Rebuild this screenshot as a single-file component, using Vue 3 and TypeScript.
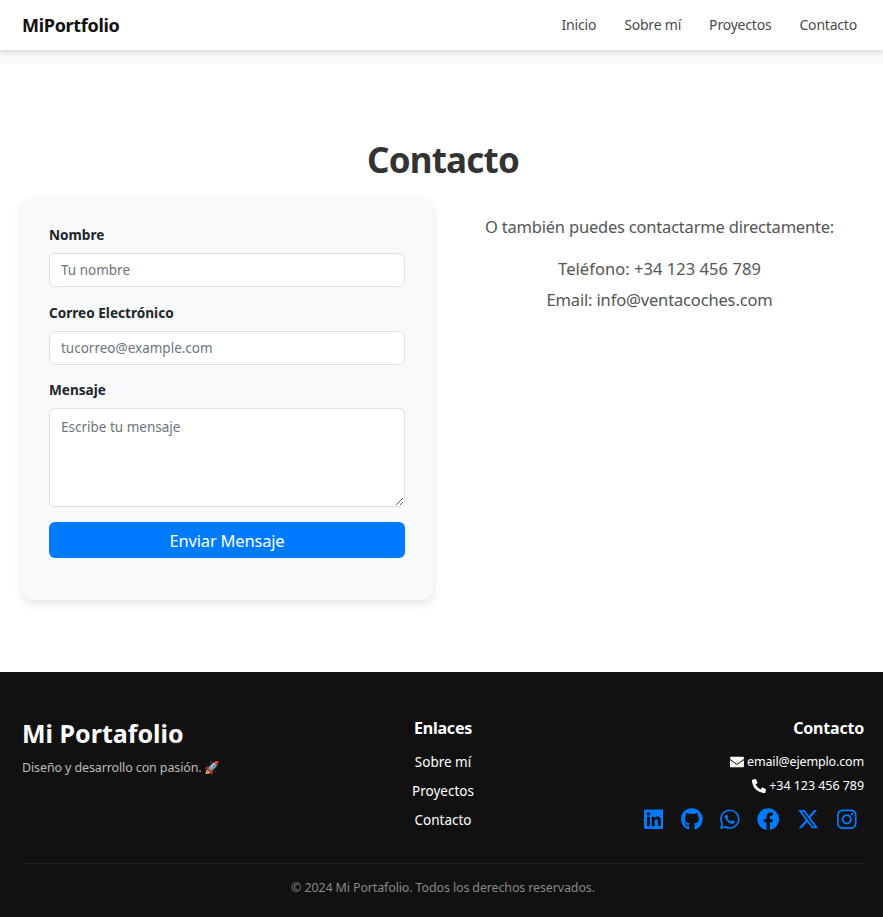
<script setup lang="ts">
const links: string[] = ['Inicio', 'Sobre mí', 'Proyectos', 'Contacto']
const footerLinks: string[] = ['Sobre mí', 'Proyectos', 'Contacto']
const socials: { name: string; w: number; d: string }[] = [
  { name: 'LinkedIn', w: 448, d: 'M416 32H31.9C14.3 32 0 46.5 0 64.3v383.4C0 465.5 14.3 480 31.9 480H416c17.6 0 32-14.5 32-32.3V64.3c0-17.8-14.4-32.3-32-32.3zM135.4 416H69V202.2h66.5V416zm-33.2-243c-21.3 0-38.5-17.3-38.5-38.5S80.9 96 102.2 96c21.2 0 38.5 17.3 38.5 38.5 0 21.3-17.2 38.5-38.5 38.5zm282.1 243h-66.4V312c0-24.8-.5-56.7-34.5-56.7-34.6 0-39.9 27-39.9 54.9V416h-66.4V202.2h63.7v29.2h.9c8.9-16.8 30.6-34.5 62.9-34.5 67.2 0 79.7 44.3 79.7 101.9V416z' },
  { name: 'GitHub', w: 496, d: 'M165.9 397.4c0 2-2.3 3.6-5.2 3.6-3.3 0-5.6-1.6-5.6-3.6 0-2 2.3-3.6 5.2-3.6 3-.3 5.6 1.3 5.6 3.6zm-31.1-4.5c-.7 2 1.3 4.3 4.3 4.9 2.6 1 5.6 0 6.2-2s-1.3-4.3-4.3-5.2c-2.6-.7-5.5.3-6.2 2.3zm44.2-1.7c-2.9.7-4.9 2.6-4.6 4.9.3 2 2.9 3.3 5.9 2.6 2.9-.7 4.9-2.6 4.6-4.6-.3-1.9-3-3.2-5.9-2.9zM244.8 8C106.1 8 0 113.3 0 252c0 110.9 69.8 205.8 169.5 239.2 12.8 2.3 17.3-5.6 17.3-12.1 0-6.2-.3-40.4-.3-61.4 0 0-70 15-84.7-29.8 0 0-11.4-29.1-27.8-36.6 0 0-22.9-15.7 1.6-15.4 0 0 24.9 2 38.6 25.8 21.9 38.6 58.6 27.5 72.9 20.9 2.3-16 8.8-27.1 16-33.7-55.9-6.2-112.3-14.3-112.3-110.5 0-27.5 7.6-41.3 23.6-58.9-2.6-6.5-11.1-33.3 2.6-67.9 20.9-6.5 69 27 69 27 20-5.6 41.5-8.5 62.8-8.5s42.8 2.9 62.8 8.5c0 0 48.1-33.6 69-27 13.7 34.7 5.2 61.4 2.6 67.9 16 17.7 25.8 31.5 25.8 58.9 0 96.5-58.9 104.2-114.8 110.5 9.2 7.9 17 22.9 17 46.4 0 33.7-.3 75.4-.3 83.6 0 6.5 4.6 14.4 17.3 12.1C428.2 457.8 496 362.9 496 252 496 113.3 383.5 8 244.8 8zM97.2 352.9c-1.3 1-1 3.3.7 5.2 1.6 1.6 3.9 2.3 5.2 1 1.3-1 1-3.3-.7-5.2-1.6-1.6-3.9-2.3-5.2-1zm-10.8-8.1c-.7 1.3.3 2.9 2.3 3.9 1.6 1 3.6.7 4.3-.7.7-1.3-.3-2.9-2.3-3.9-2-.6-3.6-.3-4.3.7zm32.4 35.6c-1.6 1.3-1 4.3 1.3 6.2 2.3 2.3 5.2 2.6 6.5 1 1.3-1.3.7-4.3-1.3-6.2-2.2-2.3-5.2-2.6-6.5-1zm-11.4-14.7c-1.6 1-1.6 3.6 0 5.9 1.6 2.3 4.3 3.3 5.6 2.3 1.6-1.3 1.6-3.9 0-6.2-1.4-2.3-4-3.3-5.6-2z' },
  { name: 'WhatsApp', w: 448, d: 'M380.9 97.1C339 55.1 283.2 32 223.9 32c-122.4 0-222 99.6-222 222 0 39.1 10.2 77.3 29.6 111L0 480l117.7-30.9c32.4 17.7 68.9 27 106.1 27h.1c122.3 0 224.1-99.6 224.1-222 0-59.3-25.2-115-67.1-157zm-157 341.6c-33.2 0-65.7-8.9-94-25.7l-6.7-4-69.8 18.3L72 359.2l-4.4-7c-18.5-29.4-28.2-63.3-28.2-98.2 0-101.7 82.8-184.5 184.6-184.5 49.3 0 95.6 19.2 130.4 54.1 34.8 34.9 56.2 81.2 56.1 130.5 0 101.8-84.9 184.6-186.6 184.6zm101.2-138.2c-5.5-2.8-32.8-16.2-37.9-18-5.1-1.9-8.8-2.8-12.5 2.8-3.7 5.6-14.3 18-17.6 21.8-3.2 3.7-6.5 4.2-12 1.4-32.6-16.3-54-29.1-75.5-66-5.7-9.8 5.7-9.1 16.3-30.3 1.8-3.7.9-6.9-.5-9.7-1.4-2.8-12.5-30.1-17.1-41.2-4.5-10.8-9.1-9.3-12.5-9.5-3.2-.2-6.9-.2-10.6-.2-3.7 0-9.7 1.4-14.8 6.9-5.1 5.6-19.4 19-19.4 46.3 0 27.3 19.9 53.7 22.6 57.4 2.8 3.7 39.1 59.7 94.8 83.8 35.2 15.2 49 16.5 66.6 13.9 10.7-1.6 32.8-13.4 37.4-26.4 4.6-13 4.6-24.1 3.2-26.4-1.3-2.5-5-3.9-10.5-6.6z' },
  { name: 'Facebook', w: 512, d: 'M504 256C504 119 393 8 256 8S8 119 8 256c0 123.78 90.69 226.38 209.25 245V327.69h-63V256h63v-54.64c0-62.15 37-96.48 93.67-96.48 27.14 0 55.52 4.84 55.52 4.84v61h-31.28c-30.8 0-40.41 19.12-40.41 38.73V256h68.78l-11 71.69h-57.78V501C413.31 482.38 504 379.78 504 256z' },
  { name: 'X', w: 512, d: 'M389.2 48h70.6L305.6 224.2 487 464H345L233.7 318.6 106.5 464H35.8L200.7 275.5 26.8 48H172.4L272.9 180.9 389.2 48zM364.4 421.8h39.1L151.1 88h-42L364.4 421.8z' },
  { name: 'Instagram', w: 448, d: 'M224.1 141c-63.6 0-114.9 51.3-114.9 114.9s51.3 114.9 114.9 114.9S339 319.5 339 255.9 287.7 141 224.1 141zm0 189.6c-41.1 0-74.7-33.5-74.7-74.7s33.5-74.7 74.7-74.7 74.7 33.5 74.7 74.7-33.6 74.7-74.7 74.7zm146.4-194.3c0 14.9-12 26.8-26.8 26.8-14.9 0-26.8-12-26.8-26.8s12-26.8 26.8-26.8 26.8 12 26.8 26.8zm76.1 27.2c-1.7-35.9-9.9-67.7-36.2-93.9-26.2-26.2-58-34.4-93.9-36.2-37-2.1-147.9-2.1-184.9 0-35.8 1.7-67.6 9.9-93.9 36.1s-34.4 58-36.2 93.9c-2.1 37-2.1 147.9 0 184.9 1.7 35.9 9.9 67.7 36.2 93.9s58 34.4 93.9 36.2c37 2.1 147.9 2.1 184.9 0 35.9-1.7 67.7-9.9 93.9-36.2 26.2-26.2 34.4-58 36.2-93.9 2.1-37 2.1-147.8 0-184.8zM398.8 388c-7.8 19.6-22.9 34.7-42.6 42.6-29.5 11.7-99.5 9-132.1 9s-102.7 2.6-132.1-9c-19.6-7.8-34.7-22.9-42.6-42.6-11.7-29.5-9-99.5-9-132.1s-2.6-102.7 9-132.1c7.8-19.6 22.9-34.7 42.6-42.6 29.5-11.7 99.5-9 132.1-9s102.7-2.6 132.1 9c19.6 7.8 34.7 22.9 42.6 42.6 11.7 29.5 9 99.5 9 132.1s2.7 102.7-9 132.1z' },
]
const iconWidth = (w: number): string => `${(w / 512) * 22.4}px`
</script>

<template>
  <div class="page">
    <nav class="navbar">
      <a class="brand">MiPortfolio</a>
      <ul class="nav-links">
        <li v-for="l in links" :key="l">{{ l }}</li>
      </ul>
    </nav>

    <main class="main">
      <h1 class="title">Contacto</h1>
      <div class="columns">
        <form class="card" @submit.prevent>
          <label class="label" for="nombre">Nombre</label>
          <input id="nombre" class="field" type="text" placeholder="Tu nombre" />
          <label class="label" for="correo">Correo Electrónico</label>
          <input id="correo" class="field" type="email" placeholder="tucorreo@example.com" />
          <label class="label" for="mensaje">Mensaje</label>
          <textarea id="mensaje" class="field area" placeholder="Escribe tu mensaje"></textarea>
          <button class="send" type="submit">Enviar Mensaje</button>
        </form>
        <div class="direct">
          <p class="lead">O también puedes contactarme directamente:</p>
          <p class="line phone">Teléfono: +34 123 456 789</p>
          <p class="line mail">Email: info@ventacoches.com</p>
        </div>
      </div>
    </main>

    <footer class="footer">
      <div class="foot-top">
        <div class="foot-col">
          <h2 class="foot-brand">Mi Portafolio</h2>
          <p class="tagline">Diseño y desarrollo con pasión. <span class="rocket">🚀</span></p>
        </div>
        <div class="foot-col center">
          <h3 class="foot-head">Enlaces</h3>
          <ul class="foot-links">
            <li v-for="l in footerLinks" :key="l">{{ l }}</li>
          </ul>
        </div>
        <div class="foot-col right">
          <h3 class="foot-head">Contacto</h3>
          <p class="contact tight">
            <svg class="mini" viewBox="0 0 512 512" fill="currentColor"><path d="M502.3 190.8c3.9-3.1 9.7-.2 9.7 4.7V400c0 26.5-21.5 48-48 48H48c-26.5 0-48-21.5-48-48V195.6c0-5 5.7-7.8 9.7-4.7 22.4 17.4 52.1 39.5 154.1 113.6 21.1 15.4 56.7 47.8 92.2 47.6 35.7.3 72-32.8 92.3-47.6 102-74.1 131.6-96.3 154-113.7zM256 320c23.2.4 56.6-29.2 73.4-41.4 132.7-96.3 142.8-104.7 173.4-128.7 5.8-4.5 9.2-11.5 9.2-18.9v-19c0-26.5-21.5-48-48-48H48C21.5 64 0 85.5 0 112v19c0 7.4 3.4 14.3 9.2 18.9 30.6 23.9 40.7 32.4 173.4 128.7 16.8 12.2 50.2 41.8 73.4 41.4z"/></svg>
            email@ejemplo.com
          </p>
          <p class="contact">
            <svg class="mini" viewBox="0 0 512 512" fill="currentColor"><path d="M497.39 361.8l-112-48a24 24 0 0 0-28 6.9l-49.6 60.6A370.66 370.66 0 0 1 130.6 204.11l60.6-49.6a23.94 23.94 0 0 0 6.9-28l-48-112A24.16 24.16 0 0 0 122.6.61l-104 24A24 24 0 0 0 0 48c0 256.5 207.9 464 464 464a24 24 0 0 0 23.4-18.6l24-104a24.29 24.29 0 0 0-14.01-27.6z"/></svg>
            +34 123 456 789
          </p>
          <div class="socials">
            <svg v-for="s in socials" :key="s.name" class="social" :viewBox="`0 0 ${s.w} 512`" fill="currentColor" :style="{ width: iconWidth(s.w) }" :aria-label="s.name"><path :d="s.d"/></svg>
          </div>
        </div>
      </div>
      <p class="copy">© 2024 Mi Portafolio. Todos los derechos reservados.</p>
    </footer>
  </div>
</template>

<style>
html, body { margin: 0; background: #f8f9fa; }
</style>

<style scoped>
.page {
  width: 883px;
  min-height: 917px;
  font-family: "Noto Sans", "Open Sans", sans-serif;
  background: #f8f9fa;
}
.navbar {
  position: relative;
  height: 50px;
  box-sizing: border-box;
  padding: 0 26px 0 22px;
  display: flex;
  align-items: center;
  justify-content: space-between;
  background: #fff;
  box-shadow: 0 2px 5px rgba(0, 0, 0, 0.15);
}
.brand { font-size: 18px; font-weight: 700; color: #111; letter-spacing: -0.3px; }
.nav-links {
  display: flex;
  gap: 28px;
  list-style: none;
  margin: 0 0 2px;
  padding: 0;
  font-size: 14px;
  color: #4a4a4a;
  letter-spacing: -0.2px;
}
.main {
  margin-top: 14px;
  background: #fff;
  height: 608px;
  box-sizing: border-box;
  padding: 72px 19px 0 22px;
}
.title {
  margin: 0 0 14px;
  text-align: center;
  font-size: 35px;
  line-height: 47px;
  font-weight: 700;
  color: #333;
  letter-spacing: -0.8px;
}
.columns { display: flex; gap: 22px; align-items: flex-start; }
.card {
  width: 411px;
  height: 403px;
  box-sizing: border-box;
  flex: none;
  padding: 27px 28px 0 27px;
  background: #f8f9fa;
  border-radius: 12px;
  box-shadow: 0 4px 10px rgba(0, 0, 0, 0.1);
  display: flex;
  flex-direction: column;
}
.label {
  font-size: 13.6px;
  line-height: 22px;
  font-weight: 700;
  color: #212529;
  margin-bottom: 7px;
}
.field {
  display: block;
  width: 100%;
  height: 34px;
  box-sizing: border-box;
  border: 1px solid #dee2e6;
  border-radius: 6px;
  background: #fff;
  padding: 0 11px;
  font: 400 13.5px "Noto Sans", sans-serif;
  color: #212529;
  margin-bottom: 14.5px;
  outline: none;
}
.field::placeholder { color: #6c757d; opacity: 1; }
.area {
  height: 99px;
  padding-top: 9px;
  line-height: 18px;
  resize: vertical;
}
.send {
  height: 36px;
  border: 0;
  border-radius: 6px;
  background: #007bff;
  color: #fff;
  font: 400 16.5px "Noto Sans", sans-serif;
  letter-spacing: -0.2px;
  padding: 2px 0 0;
}
.direct { flex: 1; text-align: center; color: #555; padding-top: 18px; }
.direct p { margin: 0; }
.lead { font-size: 16.5px; line-height: 24px; letter-spacing: -0.2px; margin-bottom: 14px !important; }
.line { font-size: 16.5px; line-height: 31px; }
.phone { letter-spacing: 0.05px; }
.mail { letter-spacing: -0.15px; }
.footer {
  background: #111;
  height: 245px;
  box-sizing: border-box;
  padding: 45px 19px 0 22px;
  color: #fff;
}
.foot-top {
  display: flex;
  height: 146px;
  border-bottom: 1px solid #222;
}
.foot-col { flex: 1; min-width: 0; }
.center { text-align: center; }
.right { text-align: right; }
.foot-brand { margin: 0 0 8px; font-size: 25px; line-height: 33px; font-weight: 700; }
.tagline { margin: 0; font-size: 12.5px; line-height: 20px; color: #bbb; letter-spacing: -0.12px; }
.rocket { font-family: "Noto Color Emoji", sans-serif; letter-spacing: 0; }
.foot-head { margin: 0 0 9px; font-size: 16px; line-height: 22px; font-weight: 700; letter-spacing: -0.2px; }
.right .foot-head { margin-bottom: 11px; }
.foot-links { list-style: none; margin: 0; padding: 0; font-size: 13.5px; line-height: 29px; }
.contact { margin: 0; font-size: 12.5px; line-height: 24px; letter-spacing: -0.05px; }
.tight { letter-spacing: -0.15px; }
.mini { width: 14px; height: 14px; vertical-align: -2.5px; }
.socials {
  display: flex;
  justify-content: flex-end;
  gap: 17.6px;
  color: #007bff;
  margin-top: 10px;
  padding-right: 7px;
}
.social { height: 22.4px; flex: none; }
.copy {
  margin: 14px 0 0;
  text-align: center;
  font-size: 12.5px;
  line-height: 20px;
  letter-spacing: -0.14px;
  color: #888;
}
</style>
